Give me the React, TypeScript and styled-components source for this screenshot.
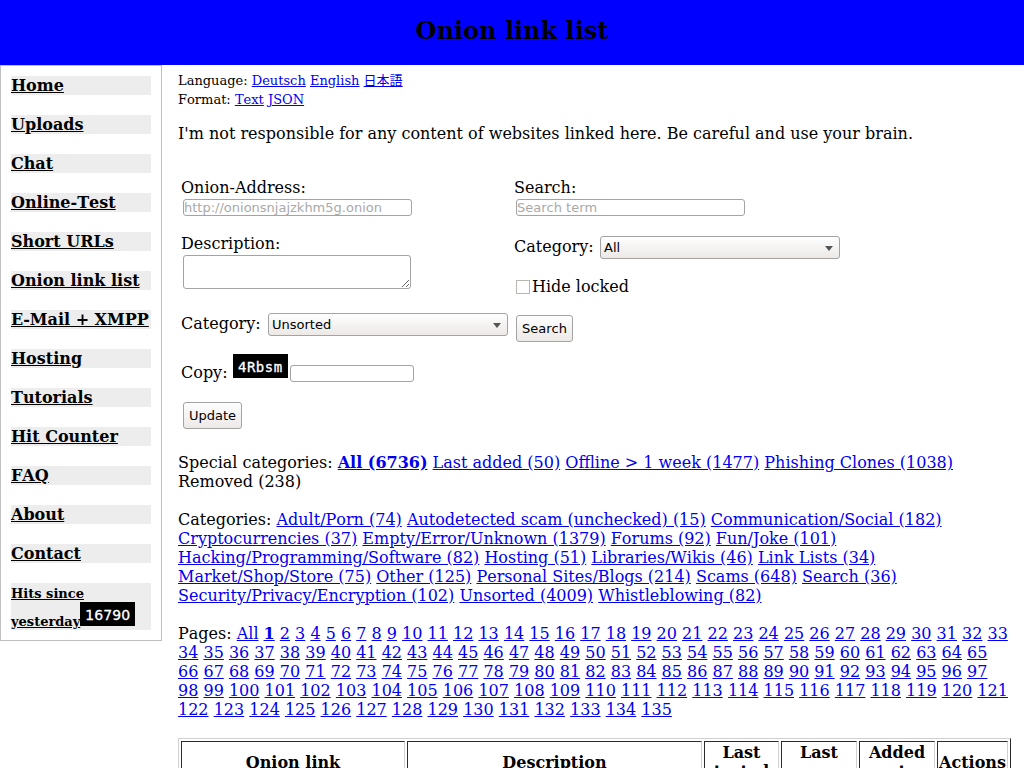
import React from "react";
import styled, { createGlobalStyle, css } from "styled-components";

const GlobalStyle = createGlobalStyle`
  html, body { margin: 0; padding: 0; background: #fff; }
  body {
    font-family: "DejaVu Serif", "Noto Sans CJK JP", serif;
    font-size: 16px;
    line-height: 19px;
    font-kerning: none;
    color: #000;
  }
`;

const Page = styled.div`
  height: 768px;
  overflow: hidden;
`;

const Header = styled.header`
  height: 65px;
  background: #00f;
  text-align: center;
`;

const Title = styled.h1`
  margin: 0;
  padding-top: 17px;
  font-size: 24px;
  line-height: 28px;
  font-weight: bold;
`;

const Body = styled.div`
  display: flex;
  align-items: flex-start;
  gap: 16px;
`;

const Sidebar = styled.nav`
  box-sizing: border-box;
  flex: none;
  width: 162px;
  padding: 10px;
  border: 1px solid #c0c0c0;
  display: flex;
  flex-direction: column;
  gap: 20px;
`;

const NavItem = styled.a`
  display: block;
  background: #ededed;
  color: #000;
  font-weight: bold;
  text-decoration: underline;
  white-space: nowrap;
`;

const HitCounter = styled(NavItem)`
  height: 47px;
`;

const Small = styled.span`
  font-size: 13px;
  line-height: 0;
`;

const CodeImage = styled.span<{ $digits?: boolean }>`
  display: inline-block;
  overflow: hidden;
  box-sizing: border-box;
  width: 55px;
  height: 24px;
  padding-left: 5px;
  background: #000;
  color: #fff;
  font: 14px/26px ${(p) => (p.$digits ? '"DejaVu Sans"' : '"DejaVu Sans Mono"')}, sans-serif;
  letter-spacing: ${(p) => (p.$digits ? "0.1px" : "0.5px")};
  -webkit-text-stroke: 0.3px #fff;
`;

const Main = styled.main`
  flex: none;
  width: 833px;
  padding-top: 6px;
`;

const Meta = styled.div`
  font-size: 13px;
  height: 19px;
  white-space: nowrap;
`;

const Notice = styled.p`
  margin: 15px 0 0;
`;

const Forms = styled.div`
  display: flex;
  height: 310px;
  padding: 35px 0 0 3px;
  box-sizing: border-box;
  white-space: nowrap;
`;

const Form = styled.form<{ $width: number }>`
  flex: none;
  width: ${(p) => p.$width}px;
`;

const Row = styled.div<{ $gap?: number; $inset?: number }>`
  display: flex;
  align-items: flex-start;
  margin-top: ${(p) => p.$gap ?? 0}px;
  padding-left: ${(p) => p.$inset ?? 0}px;
`;

const Label = styled.label<{ $width?: number; $top?: number }>`
  display: block;
  width: ${(p) => (p.$width ? `${p.$width}px` : "auto")};
  margin-top: ${(p) => p.$top ?? 0}px;
`;

const control = css`
  box-sizing: border-box;
  display: block;
  margin: 0;
  border: 1px solid #a3a3a3;
  border-radius: 3px;
  font: 13px/15px "DejaVu Sans", sans-serif;
  font-kerning: none;
  color: #000;
  outline: none;
`;

const Input = styled.input<{ $width: number; $top?: number }>`
  ${control}
  width: ${(p) => p.$width}px;
  height: 17px;
  margin-top: ${(p) => p.$top ?? 0}px;
  padding: 0;
  background: #fff;
  &::placeholder { color: #a9a9a9; opacity: 1; }
`;

const TextArea = styled.textarea`
  ${control}
  width: 228px;
  height: 34px;
  resize: both;
  padding: 0;
`;

const SelectBox = styled.div`
  ${control}
  width: 240px;
  height: 23px;
  padding: 0 6px 0 3px;
  line-height: 21px;
  display: flex;
  align-items: center;
  justify-content: space-between;
  background: linear-gradient(#fefefe, #ece9e7);
`;

const Arrow = styled.span`
  margin-top: 1px;
  border: 4px solid transparent;
  border-width: 5px 4px 0;
  border-top-color: #555;
`;

const Button = styled.button<{ $width: number }>`
  ${control}
  width: ${(p) => p.$width}px;
  height: 27px;
  padding: 0;
  background: linear-gradient(#fefefe, #ece9e7);
`;

const Checkbox = styled.input`
  appearance: none;
  box-sizing: border-box;
  width: 14px;
  height: 14px;
  margin: 3px 2px 0 0;
  border: 1px solid #bab5b0;
  background: #fff;
`;

const TextBlock = styled.div`
  margin-bottom: 19px;
  white-space: nowrap;
`;

const Link = styled.a<{ $bold?: boolean }>`
  color: #00e;
  text-decoration: underline;
  font-weight: ${(p) => (p.$bold ? "bold" : "normal")};
`;

const Table = styled.table`
  table-layout: fixed;
  width: 833px;
  border: 1px solid;
  border-color: #d0d0d0 #2c2c2c #2c2c2c #d0d0d0;
  border-spacing: 2px;
  margin-top: 19px;
`;

const Th = styled.th<{ $width: number }>`
  box-sizing: border-box;
  width: ${(p) => p.$width}px;
  height: 42px;
  padding: 1px 0;
  border: 1px solid;
  border-color: #2c2c2c #d0d0d0 #d0d0d0 #2c2c2c;
`;

const nav = [
  "Home", "Uploads", "Chat", "Online-Test", "Short URLs", "Onion link list",
  "E-Mail + XMPP", "Hosting", "Tutorials", "Hit Counter", "FAQ", "About", "Contact",
];

const categoryLines = [
  ["Adult/Porn (74)", "Autodetected scam (unchecked) (15)", "Communication/Social (182)"],
  ["Cryptocurrencies (37)", "Empty/Error/Unknown (1379)", "Forums (92)", "Fun/Joke (101)"],
  ["Hacking/Programming/Software (82)", "Hosting (51)", "Libraries/Wikis (46)", "Link Lists (34)"],
  ["Market/Shop/Store (75)", "Other (125)", "Personal Sites/Blogs (214)", "Scams (648)", "Search (36)"],
  ["Security/Privacy/Encryption (102)", "Unsorted (4009)", "Whistleblowing (82)"],
];

const range = (from: number, to: number) =>
  Array.from({ length: to - from + 1 }, (_, i) => String(from + i));

const pageLines = [
  ["All", ...range(1, 33)],
  range(34, 65),
  range(66, 97),
  range(98, 121),
  range(122, 135),
];

const columns: [string[], number][] = [
  [["Onion link"], 224],
  [["Description"], 295],
  [["Last", "tested"], 75],
  [["Last", "seen"], 76],
  [["Added", "at"], 76],
  [["Actions"], 71],
];

function Links({ items, bold }: { items: string[]; bold?: string }) {
  return (
    <>
      {items.map((item) => (
        <React.Fragment key={item}>
          <Link href="#" $bold={item === bold}>{item}</Link>{" "}
        </React.Fragment>
      ))}
    </>
  );
}

export default function App() {
  return (
    <Page>
      <GlobalStyle />
      <Header><Title>Onion link list</Title></Header>
      <Body>
        <Sidebar>
          {nav.map((item) => <NavItem href="#" key={item}>{item}</NavItem>)}
          <HitCounter href="#">
            <Small>Hits since<br />yesterday</Small><CodeImage $digits>16790</CodeImage>
          </HitCounter>
        </Sidebar>
        <Main>
          <Meta>Language: <Links items={["Deutsch", "English", "日本語"]} /></Meta>
          <Meta>Format: <Links items={["Text", "JSON"]} /></Meta>
          <Notice>I'm not responsible for any content of websites linked here. Be careful and use your brain.</Notice>
          <Forms>
            <Form $width={333}>
              <Label>Onion-Address:</Label>
              <Row $gap={2} $inset={2}><Input $width={229} placeholder="http://onionsnjajzkhm5g.onion" /></Row>
              <Row $gap={18}><Label>Description:</Label></Row>
              <Row $gap={2} $inset={2}><TextArea /></Row>
              <Row $gap={24}>
                <Label $width={87} $top={1}>Category:</Label>
                <SelectBox>Unsorted<Arrow /></SelectBox>
              </Row>
              <Row $gap={18}>
                <Label $width={52} $top={9}>Copy:</Label>
                <CodeImage>4Rbsm</CodeImage>
                <Row $inset={2}><Input $width={124} $top={11} /></Row>
              </Row>
              <Row $gap={20} $inset={2}><Button type="button" $width={59}>Update</Button></Row>
            </Form>
            <Form $width={330}>
              <Label>Search:</Label>
              <Row $gap={2} $inset={2}><Input $width={229} placeholder="Search term" /></Row>
              <Row $gap={20}>
                <Label $width={86} $top={1}>Category:</Label>
                <SelectBox>All<Arrow /></SelectBox>
              </Row>
              <Row $gap={18} $inset={2}><Checkbox type="checkbox" /><Label>Hide locked</Label></Row>
              <Row $gap={19} $inset={2}><Button type="button" $width={57}>Search</Button></Row>
            </Form>
          </Forms>
          <TextBlock>
            <div>
              Special categories:{" "}
              <Links
                items={["All (6736)", "Last added (50)", "Offline > 1 week (1477)", "Phishing Clones (1038)"]}
                bold="All (6736)"
              />
            </div>
            <div>Removed (238)</div>
          </TextBlock>
          <TextBlock>
            {categoryLines.map((line, i) => (
              <div key={i}>{i === 0 && "Categories: "}<Links items={line} /></div>
            ))}
          </TextBlock>
          <TextBlock>
            {pageLines.map((line, i) => (
              <div key={i}>{i === 0 && "Pages: "}<Links items={line} bold="1" /></div>
            ))}
          </TextBlock>
          <Table>
            <thead>
              <tr>
                {columns.map(([lines, width], i) => (
                  <Th key={i} $width={width}>
                    {lines.map((line) => <div key={line}>{line}</div>)}
                  </Th>
                ))}
              </tr>
            </thead>
          </Table>
        </Main>
      </Body>
    </Page>
  );
}
